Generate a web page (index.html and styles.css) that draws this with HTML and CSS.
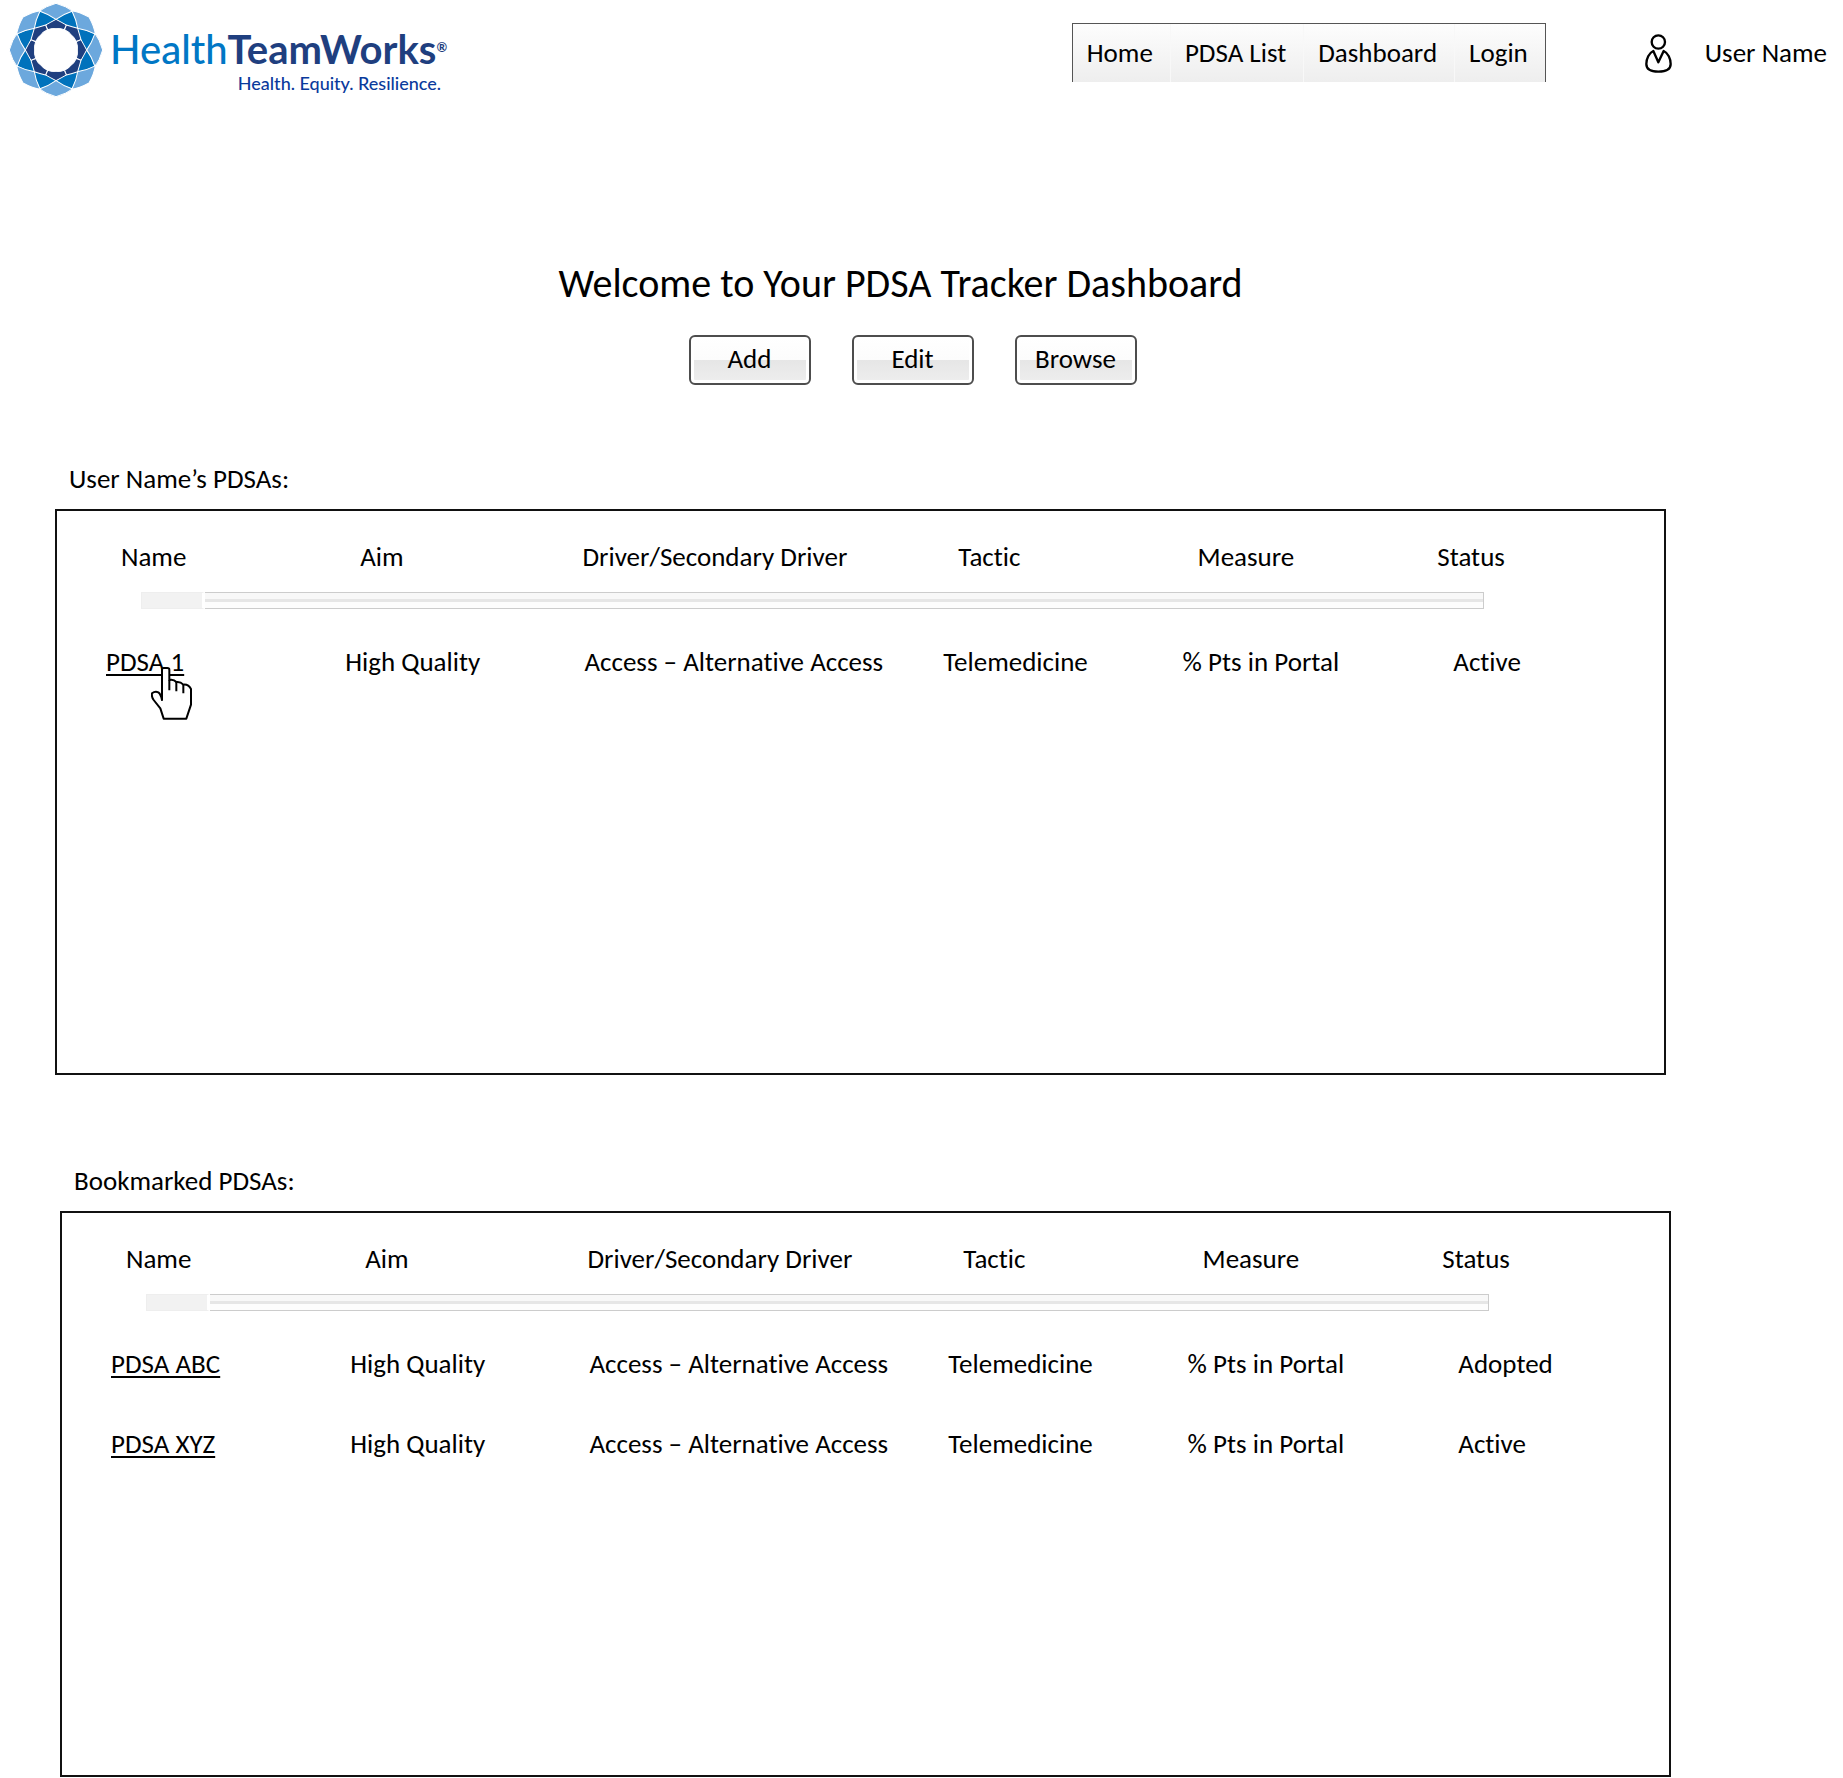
FILE: index.html
```html
<!DOCTYPE html>
<html lang="en">
<head>
<meta charset="utf-8">
<meta name="viewport" content="width=device-width, initial-scale=1">
<title>PDSA Tracker Dashboard</title>
<link rel="stylesheet" href="styles.css">
</head>
<body>
<header class="header">
  <a class="logo" href="#">
    <svg class="logo-mark" viewBox="-141 -141 282 282" aria-hidden="true">
      <defs>
        <path id="outer" d="M0-140Q32-131 51-116Q24-106 0-90Q-24-106-51-116Q-32-131 0-140Z"/>
        <path id="middle" d="M0-126Q22-107 36-84Q17-81 0-72Q-17-81-36-84Q-22-107 0-126Z"/>
        <path id="inner" d="M0-92Q15-84 31-75L25-61Q11-66 0-64Q-11-66-25-61L-31-75Q-15-84 0-92Z"/>
      </defs>
      <g fill="#6ca8dd" stroke="#fff" stroke-width="3">
        <use href="#outer"/><use href="#outer" transform="rotate(45)"/><use href="#outer" transform="rotate(90)"/><use href="#outer" transform="rotate(135)"/><use href="#outer" transform="rotate(180)"/><use href="#outer" transform="rotate(225)"/><use href="#outer" transform="rotate(270)"/><use href="#outer" transform="rotate(315)"/>
      </g>
      <g fill="#0072bc" stroke="#fff" stroke-width="3" transform="rotate(22.5)">
        <use href="#middle"/><use href="#middle" transform="rotate(45)"/><use href="#middle" transform="rotate(90)"/><use href="#middle" transform="rotate(135)"/><use href="#middle" transform="rotate(180)"/><use href="#middle" transform="rotate(225)"/><use href="#middle" transform="rotate(270)"/><use href="#middle" transform="rotate(315)"/>
      </g>
      <g fill="#1f3f7f" stroke="#fff" stroke-width="3">
        <use href="#inner"/><use href="#inner" transform="rotate(45)"/><use href="#inner" transform="rotate(90)"/><use href="#inner" transform="rotate(135)"/><use href="#inner" transform="rotate(180)"/><use href="#inner" transform="rotate(225)"/><use href="#inner" transform="rotate(270)"/><use href="#inner" transform="rotate(315)"/>
      </g>
    </svg>
    <span class="logo-text">
      <span class="logo-name">Health<b>TeamWorks</b><span class="logo-reg">®</span></span>
      <span class="logo-tagline">Health. Equity. Resilience.</span>
    </span>
  </a>
  <nav class="nav">
    <a href="#">Home</a>
    <a href="#">PDSA List</a>
    <a href="#">Dashboard</a>
    <a href="#">Login</a>
  </nav>
  <div class="user">
    <svg class="user-icon" viewBox="0 0 81 117" fill="none" stroke="#000" stroke-width="7" stroke-linejoin="round" aria-hidden="true">
      <circle cx="40" cy="24" r="20"/>
      <path d="M25 51C12 57 4 74 4 90C4 105 16 113 40 113C64 113 77 105 77 90C77 74 69 57 56 51L40 85Z"/>
    </svg>
    <span>User Name</span>
  </div>
</header>

<main>
  <div class="hero">
    <h1>Welcome to Your PDSA Tracker Dashboard</h1>
    <div class="actions">
      <button type="button">Add</button>
      <button type="button">Edit</button>
      <button type="button">Browse</button>
    </div>
  </div>

  <section class="list">
    <h2>User Name’s PDSAs:</h2>
    <div class="panel">
      <table>
        <colgroup><col class="col"><col class="col"><col class="col-driver"><col class="col"><col class="col-measure"><col></colgroup>
        <thead>
          <tr><th>Name</th><th>Aim</th><th class="th-driver">Driver/Secondary Driver</th><th>Tactic</th><th>Measure</th><th class="th-status">Status</th></tr>
          <tr><td class="scroll" colspan="6"><input type="range" min="0" max="100" value="0" aria-label="Scroll your PDSAs"></td></tr>
        </thead>
        <tbody>
          <tr>
            <td><span class="pointed"><a href="#">PDSA 1</a>
              <svg class="hand" viewBox="0 0 123 159" fill="none" stroke="#000" stroke-width="6" stroke-linejoin="round" aria-hidden="true">
                <path fill="#fff" d="M33 99V8Q33 3 38 3H49Q55 3 55 8V39Q68 36 76 45Q88 43 97 53Q112 51 120 66V113L106 155H38L28 124L8 99Q1 90 3 79Q12 72 22 76Q30 82 33 99Z"/>
                <path d="M55 39V70M76 45V73M97 53V79"/>
              </svg></span></td>
            <td>High Quality</td><td>Access – Alternative Access</td><td>Telemedicine</td><td>% Pts in Portal</td><td>Active</td>
          </tr>
        </tbody>
      </table>
    </div>
  </section>

  <section class="list list-bookmarked">
    <h2>Bookmarked PDSAs:</h2>
    <div class="panel">
      <table>
        <colgroup><col class="col"><col class="col"><col class="col-driver"><col class="col"><col class="col-measure"><col></colgroup>
        <thead>
          <tr><th>Name</th><th>Aim</th><th class="th-driver">Driver/Secondary Driver</th><th>Tactic</th><th>Measure</th><th class="th-status">Status</th></tr>
          <tr><td class="scroll" colspan="6"><input type="range" min="0" max="100" value="0" aria-label="Scroll bookmarked PDSAs"></td></tr>
        </thead>
        <tbody>
          <tr><td><a href="#">PDSA ABC</a></td><td>High Quality</td><td>Access – Alternative Access</td><td>Telemedicine</td><td>% Pts in Portal</td><td>Adopted</td></tr>
          <tr><td><a href="#">PDSA XYZ</a></td><td>High Quality</td><td>Access – Alternative Access</td><td>Telemedicine</td><td>% Pts in Portal</td><td>Active</td></tr>
        </tbody>
      </table>
    </div>
  </section>
</main>
</body>
</html>
```
FILE: styles.css
```css
* { box-sizing: border-box; }

body {
  margin: 0;
  background: #fff;
  color: #000;
  font: 27px/32px Carlito, Calibri, Lato, sans-serif;
  font-variant-ligatures: none;
}

a { color: inherit; }

/* Header */
.header {
  display: flex;
  align-items: flex-start;
  height: 104px;
  padding: 0 16px 0 9px;
}

.logo {
  display: flex;
  gap: 7px;
  padding-top: 3px;
  text-decoration: none;
}

.logo-mark { width: 94px; height: 94px; }

.logo-text {
  display: flex;
  flex-direction: column;
  padding-top: 22px;
  font-family: Lato, sans-serif;
}

.logo-name {
  display: flex;
  font-size: 40px;
  line-height: 48px;
  font-weight: 500;
  color: #0077c5;
}

.logo-name b {
  font-weight: 700;
  color: #1f3f7f;
}

.logo-reg {
  font-size: 13px;
  line-height: 44px;
  font-weight: 700;
  color: #1f3f7f;
}

.logo-tagline {
  align-self: flex-end;
  padding-right: 6px;
  font-size: 18px;
  line-height: 20px;
  font-weight: 500;
  color: #0a3a9c;
}

.nav {
  display: flex;
  margin: 23px 99px 0 auto;
  height: 59px;
  border: 1px solid #555;
  border-bottom: 0;
  background: linear-gradient(#fdfdfd, #eee);
}

.nav a {
  padding: 13px 17px 0 14px;
  text-decoration: none;
}

.nav a + a { border-left: 1px solid #f8f8f8; }

.user {
  display: flex;
  gap: 33px;
  padding-top: 34px;
  line-height: 38px;
}

.user-icon { width: 27px; height: 39px; }

/* Title and actions */
.hero {
  display: flex;
  flex-direction: column;
  align-items: center;
  padding-top: 156px;
}

h1 {
  margin: 0;
  padding-right: 42px;
  font-size: 40px;
  line-height: 48px;
  font-weight: 400;
}

.actions {
  display: flex;
  gap: 41px;
  padding: 27px 18px 0 0;
}

button {
  width: 122px;
  height: 50px;
  padding: 0 0 2px;
  border: 2px solid #4d4d4d;
  border-radius: 6px;
  background: linear-gradient(#fff, #fcfcfc 50%, #e6e6e6 50%, #eee) padding-box;
  box-shadow: inset 0 0 0 3px #fff;
  color: inherit;
  font: inherit;
}

/* PDSA lists */
.list { margin: 78px 177px 0 55px; }

.list-bookmarked { margin: 90px 172px 2px 60px; }

h2 {
  margin: 0;
  padding: 0 0 14px 14px;
  font-size: 27px;
  line-height: 32px;
  font-weight: 400;
}

.panel {
  min-height: 566px;
  padding: 30px 0 0 33px;
  border: 2px solid #111;
}

table {
  width: 100%;
  table-layout: fixed;
  border-collapse: collapse;
}

.col { width: 15.2%; }
.col-driver { width: 22.8%; }
.col-measure { width: 17.2%; }

th, td {
  padding: 0 0 0 16px;
  text-align: left;
  font-weight: 400;
  white-space: nowrap;
}

th { padding-left: 31px; }
.th-driver { padding-left: 14px; }
.th-status { padding-left: 0; }

thead tr { height: 32px; }
tbody tr { height: 80px; }

.scroll {
  height: 49px;
  padding: 19px 180px 0 51px;
  vertical-align: top;
  line-height: 0;
}

input[type="range"] {
  -webkit-appearance: none;
  appearance: none;
  width: 100%;
  height: 17px;
  margin: 0;
  border: 1px solid #ccc;
  border-left: 0;
  background: linear-gradient(#f8f8f8 40%, #e6e6e6 40%, #e6e6e6 60%, #fdfdfd 60%);
}

input[type="range"]::-webkit-slider-thumb {
  -webkit-appearance: none;
  appearance: none;
  width: 64px;
  height: 17px;
  border: 1px solid #eee;
  border-right: 3px solid #fff;
  background: #f2f2f2;
}

td a {
  text-decoration-thickness: 2px;
  text-underline-offset: 3px;
}

.pointed { position: relative; }

/* Pointer resting on the first link */
.hand {
  position: absolute;
  left: 45px;
  top: 22px;
  width: 41px;
  height: 53px;
}
```
